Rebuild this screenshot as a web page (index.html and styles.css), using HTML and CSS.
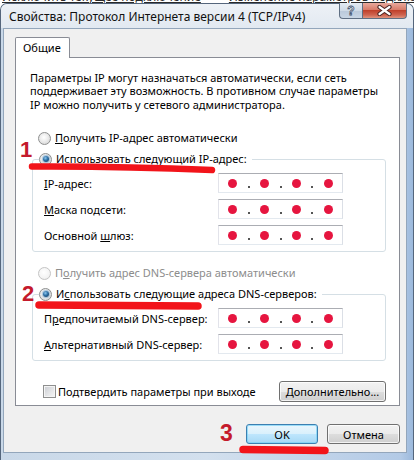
FILE: index.html
```html
<!DOCTYPE html>
<html lang="ru">
<head>
<meta charset="utf-8">
<title>Свойства: Протокол Интернета версии 4 (TCP/IPv4)</title>
<link rel="stylesheet" href="styles.css">
</head>
<body>
<div class="behind"><span class="b1">Исключить текущее подключение</span><span class="b2">Изменение параметров подключения</span></div>
<div class="window">
  <div class="titlebar">
    <div class="title">Свойства: Протокол Интернета версии 4 (TCP/IPv4)</div>
    <div class="caption">
      <div class="cbtn help"><span>?</span></div>
      <div class="cbtn close">
        <svg width="15" height="11" viewBox="0 0 15 11"><path d="M2.5 2 L12.5 9 M12.5 2 L2.5 9" stroke="#4a2320" stroke-width="4.2" stroke-linecap="round"/><path d="M2.5 2 L12.5 9 M12.5 2 L2.5 9" stroke="#fff" stroke-width="2.2" stroke-linecap="round"/></svg>
      </div>
    </div>
  </div>
  <div class="client">
    <div class="tabs"><div class="tab">Общие</div></div>
    <div class="panel">
      <p class="desc">Параметры IP могут назначаться автоматически, если сеть<br>поддерживает эту возможность. В противном случае параметры<br>IP можно получить у сетевого администратора.</p>

      <div class="radio-row first"><span class="radio"></span><span><u>П</u>олучить IP-адрес автоматически</span></div>
      <fieldset class="group">
        <legend class="radio-row"><span class="radio on"></span><span><u>И</u>спользовать следующий IP-адрес:</span></legend>
        <div class="fields">
          <div class="field"><span class="lbl"><u>I</u>P-адрес:</span>
            <div class="ipbox"><span class="seg"><i class="dot"></i></span><b class="sep"></b><span class="seg"><i class="dot"></i></span><b class="sep"></b><span class="seg"><i class="dot"></i></span><b class="sep"></b><span class="seg"><i class="dot"></i></span></div></div>
          <div class="field"><span class="lbl"><u>М</u>аска подсети:</span>
            <div class="ipbox"><span class="seg"><i class="dot"></i></span><b class="sep"></b><span class="seg"><i class="dot"></i></span><b class="sep"></b><span class="seg"><i class="dot"></i></span><b class="sep"></b><span class="seg"><i class="dot"></i></span></div></div>
          <div class="field"><span class="lbl">Основной <u>ш</u>люз:</span>
            <div class="ipbox"><span class="seg"><i class="dot"></i></span><b class="sep"></b><span class="seg"><i class="dot"></i></span><b class="sep"></b><span class="seg"><i class="dot"></i></span><b class="sep"></b><span class="seg"><i class="dot"></i></span></div></div>
        </div>
      </fieldset>

      <div class="radio-row dns disabled"><span class="radio"></span><span>П<u>о</u>лучить адрес DNS-сервера автоматически</span></div>
      <fieldset class="group">
        <legend class="radio-row"><span class="radio on"></span><span>И<u>с</u>пользовать следующие адреса DNS-серверов:</span></legend>
        <div class="fields">
          <div class="field"><span class="lbl">П<u>р</u>едпочитаемый DNS-сервер:</span>
            <div class="ipbox"><span class="seg"><i class="dot"></i></span><b class="sep"></b><span class="seg"><i class="dot"></i></span><b class="sep"></b><span class="seg"><i class="dot"></i></span><b class="sep"></b><span class="seg"><i class="dot"></i></span></div></div>
          <div class="field"><span class="lbl"><u>А</u>льтернативный DNS-сервер:</span>
            <div class="ipbox"><span class="seg"><i class="dot"></i></span><b class="sep"></b><span class="seg"><i class="dot"></i></span><b class="sep"></b><span class="seg"><i class="dot"></i></span><b class="sep"></b><span class="seg"><i class="dot"></i></span></div></div>
        </div>
      </fieldset>

      <div class="bottom-row">
        <div class="check-row"><span class="checkbox"></span><span>Подтвердить параметры при выходе</span></div>
        <div class="btn adv"><span><u>Д</u>ополнительно...</span></div>
      </div>
    </div>
    <div class="dialog-btns">
      <div class="btn default">OK</div>
      <div class="btn">Отмена</div>
    </div>
  </div>
</div>

<svg class="strokes" width="414" height="460" viewBox="0 0 414 460">
  <path d="M32 166.5 Q120 166 212 170" stroke="#f2141a" stroke-width="6.5" stroke-linecap="round" fill="none"/>
  <path d="M39 305 Q120 305.5 198 306" stroke="#f2141a" stroke-width="7.5" stroke-linecap="round" fill="none"/>
  <path d="M243 449.5 Q285 450 325 450.5" stroke="#f2141a" stroke-width="7.5" stroke-linecap="round" fill="none"/>
</svg>
<span class="num n1">1</span>
<span class="num n2">2</span>
<span class="num n3">3</span>
</body>
</html>
```

FILE: styles.css
```css
* { box-sizing: border-box; }
html, body { margin: 0; padding: 0; }
body {
  width: 414px;
  height: 460px;
  overflow: hidden;
  position: relative;
  background: #fff;
  font-family: "Noto Sans", "Open Sans", sans-serif;
  font-size: 11px;
  color: #000;
}
u { text-decoration: underline; text-underline-offset: 1px; }

.behind {
  height: 3px;
  overflow: hidden;
  white-space: nowrap;
  font-size: 12px;
  line-height: 12px;
  color: #2a2a2a;
  display: flex;
}
.behind span { display: block; margin-top: -9px; }
.behind .b1 { margin-left: 2px; text-decoration: underline; }
.behind .b2 { margin-left: 28px; text-decoration: underline; }

.window {
  height: 457px;
  display: flex;
  flex-direction: column;
  border: 1px solid #55667c;
  border-bottom: none;
  border-radius: 7px 7px 0 0;
  padding: 0 6px 7px 2px;
  background: linear-gradient(to right, #c9d8e8 0%, #d3e0ee 50%, #b3cae6 97%, #9cb9dc 100%);
}
.titlebar {
  height: 24px;
  display: flex;
  align-items: flex-start;
  justify-content: space-between;
  margin: 0 -6px 0 -2px;
  padding: 0 6px 0 2px;
  background: linear-gradient(to bottom, #edf1f6, #e2e9f1);
  border-radius: 6px 6px 0 0;
}
.title {
  padding: 4px 0 0 6px;
  font-size: 12px;
  line-height: 17px;
  color: #111;
}
.caption { display: flex; margin-top: -1px; }
.cbtn {
  height: 16px;
  display: flex;
  align-items: center;
  justify-content: center;
  border: 1px solid #5f6f83;
  border-top: none;
}
.help {
  width: 23px;
  border-right: none;
  border-radius: 0 0 0 4px;
  background: linear-gradient(to bottom, #e4ebf3 0%, #cfdae6 50%, #b9c8da 51%, #c9d6e4 100%);
}
.help span {
  font: bold 12px "Liberation Sans", sans-serif;
  color: #fff;
  -webkit-text-stroke: 0.8px #40506a;
  line-height: 12px;
}
.close {
  width: 45px;
  border-radius: 0 0 4px 0;
  background: linear-gradient(to bottom, #e9a99c 0%, #d77b69 45%, #c0412c 50%, #cf6450 80%, #e0947f 100%);
}
.close svg { display: block; }

.client {
  flex: 1;
  background: #f0f0f0;
  border: 1px solid #93a6bb;
  padding: 8px 6px 8px 11px;
  display: flex;
  flex-direction: column;
}
.tabs { display: flex; height: 20px; }
.tab {
  position: relative;
  z-index: 1;
  height: 21px;
  padding: 2px 8px 0 7px;
  background: #fff;
  border: 1px solid #898c95;
  border-bottom: none;
  border-radius: 2px 2px 0 0;
  font-size: 11px;
  line-height: 16px;
}
.panel {
  background: #fff;
  border: 1px solid #898c95;
  padding: 0 0 3px 0;
  display: flex;
  flex-direction: column;
}
.desc {
  margin: 12.5px 0 0 14px;
  line-height: 13.5px;
}
.radio-row {
  display: flex;
  align-items: center;
  height: 16px;
  line-height: 16px;
  white-space: nowrap;
}
.radio-row.first { margin: 19px 0 0 22px; }
.radio-row.dns { margin: 13px 0 0 22px; }
.radio-row.disabled { color: #8d8d8d; }
.radio {
  position: relative;
  width: 13px;
  height: 13px;
  flex: none;
  margin-right: 4px;
  border-radius: 50%;
  border: 1px solid #8e8f8f;
  background: radial-gradient(circle at 45% 40%, #ffffff 0%, #eeeeee 40%, #cfcfcf 100%);
}
.disabled .radio {
  border-color: #c4c4c4;
  background: radial-gradient(circle at 45% 40%, #ffffff 0%, #f4f4f4 60%, #e4e4e4 100%);
}
.radio.on::after {
  content: "";
  position: absolute;
  left: 2.5px;
  top: 2.5px;
  width: 6px;
  height: 6px;
  border-radius: 50%;
  background: radial-gradient(circle at 40% 35%, #8cc6ee 0%, #2b6ea4 45%, #0e3050 100%);
  box-shadow: 0 0 1px 1px rgba(90, 150, 200, 0.5);
}

.group {
  margin: 5px 13px 0 16px;
  padding: 6px 0 6px 11px;
  border: 1px solid #d5dfe5;
  border-radius: 3px;
  min-width: 0;
}
.group legend {
  margin-left: -5px;
  padding: 0 5px 0 0;
}
.fields { display: flex; flex-direction: column; gap: 6px; }
.field { display: flex; align-items: center; height: 20px; }
.lbl { width: 174px; flex: none; white-space: nowrap; }
.ipbox {
  width: 125px;
  height: 20px;
  display: flex;
  align-items: center;
  padding: 0;
  border: 1px solid;
  border-color: #abadb3 #dbdfe6 #e3e9ef #e2e3ea;
  background: #fff;
}
.seg { flex: 1; display: flex; justify-content: center; }
.dot {
  width: 9px;
  height: 9px;
  border-radius: 50%;
  background: #e6153f;
}
.sep {
  width: 2px;
  height: 2px;
  flex: none;
  align-self: flex-end;
  margin: 0 1px 4px;
  background: #555;
}

.bottom-row {
  margin: 20px 13px 0 27px;
  height: 21px;
  display: flex;
  align-items: center;
  justify-content: space-between;
}
.check-row { display: flex; align-items: center; white-space: nowrap; }
.checkbox {
  width: 13px;
  height: 13px;
  margin-right: 2px;
  border: 1px solid #8e8f8f;
  background: linear-gradient(135deg, #c9ccd1 0%, #e6e7e9 60%, #f6f6f6 100%);
  box-shadow: inset 0 0 0 1px #f4f4f4;
}
.btn {
  height: 20px;
  width: 73px;
  display: flex;
  align-items: center;
  justify-content: center;
  border: 1px solid #707070;
  border-radius: 3px;
  background: linear-gradient(to bottom, #f2f2f2 0%, #ebebeb 50%, #dddddd 51%, #cfcfcf 100%);
  box-shadow: inset 0 0 0 1px rgba(255, 255, 255, 0.75);
  white-space: nowrap;
}
.btn.adv { width: 107px; height: 21px; }
.btn.default {
  width: 72px;
  border-color: #3c7fb1;
  background: linear-gradient(to bottom, #eaf6fd 0%, #d9f0fc 50%, #bee6fd 51%, #a7d9f5 100%);
  box-shadow: inset 0 0 0 1px rgba(120, 210, 245, 0.7);
}
.dialog-btns {
  margin-top: 18px;
  display: flex;
  justify-content: flex-end;
  gap: 9px;
}

.strokes { position: absolute; left: 0; top: 0; pointer-events: none; filter: blur(0.6px); }
.num {
  position: absolute;
  font: bold 22px "Liberation Sans", Arial, sans-serif;
  color: #c41a2c;
  line-height: 22px;
}
.n1 { left: 20px; top: 139px; }
.n2 { left: 22px; top: 283px; }
.n3 { left: 220px; top: 422px; font-size: 23px; }
```
